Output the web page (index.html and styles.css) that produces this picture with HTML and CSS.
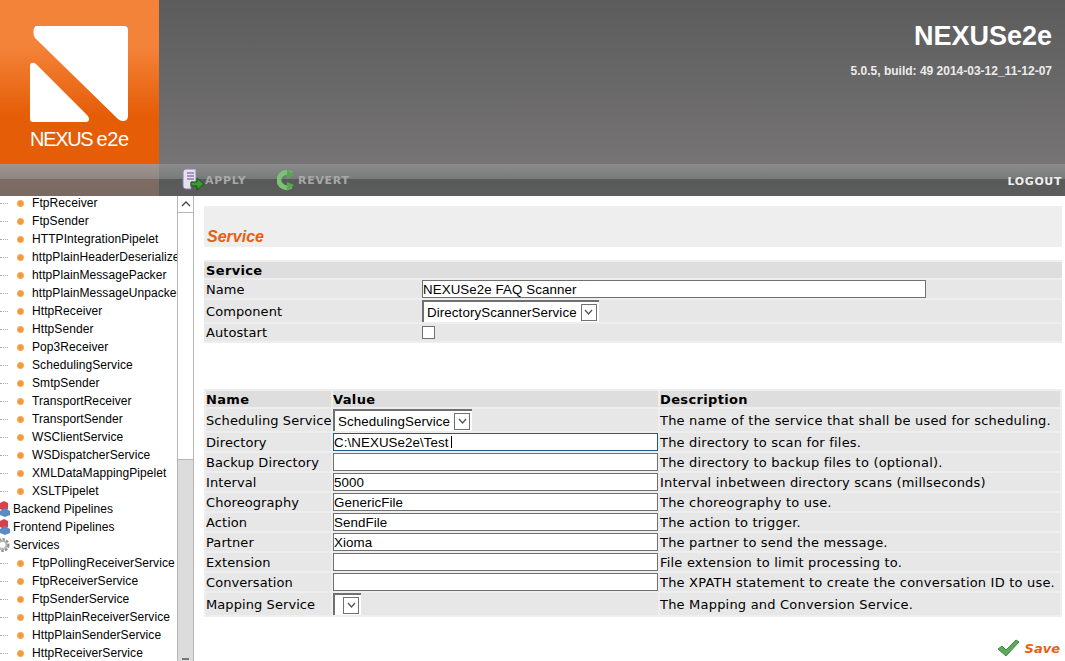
FILE: index.html
```html
<!DOCTYPE html>
<html lang="en">
<head>
	<meta charset="UTF-8">
	<title>NEXUSe2e</title>
	<link rel="stylesheet" href="styles.css">
</head>
<body>
	<header class="top">
		<div class="logo">
			<svg class="logo_mark" width="98" height="96" viewBox="0 0 98 96">
				<path d="M7 0H94Q98 0 98 4V90Q98 95 93 95Q90 95 88 93L5 12Q3 9 3.500 5Q4 0 7 0Z" fill="#fff"/>
				<path d="M0 40Q0 36.700 3 36.700Q5 36.700 7 39L57 89Q59 91 59 93Q59 96 56 96H3Q0 96 0 93Z" fill="#fff"/>
			</svg>
			<div class="logo_text">NEXUS<span class="logo_e2e">e2e</span></div>
		</div>
		<div class="brand">
			<div class="brand_name">NEXUSe2e</div>
			<div class="brand_build">5.0.5, build: 49 2014-03-12_11-12-07</div>
		</div>
	</header>
	<nav class="toolbar">
		<div class="toolbar_logo"></div>
		<div class="toolbar_main">
			<a class="tool tool_apply">
				<svg width="23" height="24" viewBox="0 0 23 24">
					<path d="M1 4Q1 1 4 1H14V14H9V21H4Q1 21 1 18Z" fill="#e6dff0" stroke="#8c80a8"/>
					<path d="M5 5H12M5 8H12M5 11H12" stroke="#8c80a8" stroke-width="1.400"/>
					<path d="M9 14H15V10L22 16L15 22V18H9Z" fill="#3c9a32" stroke="#0f5c10"/>
				</svg>
				<span>APPLY</span>
			</a>
			<a class="tool tool_revert">
				<svg width="19" height="24" viewBox="0 0 19 24">
					<path d="M14 6A7.500 7.500 0 1 0 14 18" fill="none" stroke="#7cc274" stroke-width="5"/>
					<path d="M10 1L17 7L10 11Z" fill="#5aa552"/>
					<path d="M10 14L17 17L10 23Z" fill="#5aa552"/>
				</svg>
				<span>REVERT</span>
			</a>
			<a class="logout">LOGOUT</a>
		</div>
	</nav>
	<div class="page">
		<aside class="side">
			<ul class="tree">
				<li class="leaf">FtpReceiver</li>
				<li class="leaf">FtpSender</li>
				<li class="leaf">HTTPIntegrationPipelet</li>
				<li class="leaf">httpPlainHeaderDeserializer</li>
				<li class="leaf">httpPlainMessagePacker</li>
				<li class="leaf">httpPlainMessageUnpacker</li>
				<li class="leaf">HttpReceiver</li>
				<li class="leaf">HttpSender</li>
				<li class="leaf">Pop3Receiver</li>
				<li class="leaf">SchedulingService</li>
				<li class="leaf">SmtpSender</li>
				<li class="leaf">TransportReceiver</li>
				<li class="leaf">TransportSender</li>
				<li class="leaf">WSClientService</li>
				<li class="leaf">WSDispatcherService</li>
				<li class="leaf">XMLDataMappingPipelet</li>
				<li class="leaf">XSLTPipelet</li>
				<li class="group">
					<svg width="10" height="16" viewBox="0 0 10 16"><path d="M0 2L4 0L8 2V8L4 10L0 8Z" fill="#d9414a"/><path d="M0 10L5 7L10 10V14L5 16L0 14Z" fill="#5b8ac6"/></svg>
					Backend Pipelines
				</li>
				<li class="group">
					<svg width="10" height="16" viewBox="0 0 10 16"><path d="M0 2L4 0L8 2V8L4 10L0 8Z" fill="#d9414a"/><path d="M0 10L5 7L10 10V14L5 16L0 14Z" fill="#5b8ac6"/></svg>
					Frontend Pipelines
				</li>
				<li class="group">
					<svg width="10" height="16" viewBox="0 0 10 16"><circle cx="2.500" cy="8" r="5.500" fill="none" stroke="#8f8f8f" stroke-width="3" stroke-dasharray="2.400 1.200"/><circle cx="2.500" cy="8" r="4" fill="none" stroke="#b5b5b5" stroke-width="2"/></svg>
					Services
				</li>
				<li class="leaf">FtpPollingReceiverService</li>
				<li class="leaf">FtpReceiverService</li>
				<li class="leaf">FtpSenderService</li>
				<li class="leaf">HttpPlainReceiverService</li>
				<li class="leaf">HttpPlainSenderService</li>
				<li class="leaf">HttpReceiverService</li>
			</ul>
			<div class="scrollbar">
				<div class="scroll_btn">
					<svg width="10" height="6" viewBox="0 0 10 6"><path d="M1 5L5 1L9 5" fill="none" stroke="#444" stroke-width="1.300"/></svg>
				</div>
				<div class="scroll_thumb"></div>
				<div class="scroll_rest"></div>
			</div>
		</aside>
		<main class="content">
			<h1 class="title">Service</h1>
			<table class="form form_top">
				<colgroup><col class="col_label"><col></colgroup>
				<tr><th colspan="2">Service</th></tr>
				<tr><td>Name</td><td><input class="field field_name" type="text" value="NEXUSe2e FAQ Scanner"></td></tr>
				<tr class="row_select">
					<td>Component</td>
					<td><div class="select"><span>DirectoryScannerService</span><b class="select_btn"><svg width="9" height="6" viewBox="0 0 9 6"><path d="M1 1L4.500 5L8 1" fill="none" stroke="#555" stroke-width="1.300"/></svg></b></div></td>
				</tr>
				<tr class="row_check"><td>Autostart</td><td><input class="check" type="checkbox"></td></tr>
			</table>
			<table class="form form_params">
				<colgroup><col class="col_name"><col class="col_value"><col></colgroup>
				<tr><th>Name</th><th>Value</th><th>Description</th></tr>
				<tr class="row_select">
					<td>Scheduling Service</td>
					<td><div class="select"><span>SchedulingService</span><b class="select_btn"><svg width="9" height="6" viewBox="0 0 9 6"><path d="M1 1L4.500 5L8 1" fill="none" stroke="#555" stroke-width="1.300"/></svg></b></div></td>
					<td>The name of the service that shall be used for scheduling.</td>
				</tr>
				<tr>
					<td>Directory</td>
					<td><div class="field_wrap"><input class="field field_focus" type="text" value="C:\NEXUSe2e\Test"><i class="caret"></i></div></td>
					<td>The directory to scan for files.</td>
				</tr>
				<tr><td>Backup Directory</td><td><input class="field" type="text"></td><td>The directory to backup files to (optional).</td></tr>
				<tr><td>Interval</td><td><input class="field" type="text" value="5000"></td><td>Interval inbetween directory scans (millseconds)</td></tr>
				<tr><td>Choreography</td><td><input class="field" type="text" value="GenericFile"></td><td>The choreography to use.</td></tr>
				<tr><td>Action</td><td><input class="field" type="text" value="SendFile"></td><td>The action to trigger.</td></tr>
				<tr><td>Partner</td><td><input class="field" type="text" value="Xioma"></td><td>The partner to send the message.</td></tr>
				<tr><td>Extension</td><td><input class="field" type="text"></td><td>File extension to limit processing to.</td></tr>
				<tr><td>Conversation</td><td><input class="field" type="text"></td><td>The XPATH statement to create the conversation ID to use.</td></tr>
				<tr class="row_select">
					<td>Mapping Service</td>
					<td><div class="select select_empty"><span></span><b class="select_btn"><svg width="9" height="6" viewBox="0 0 9 6"><path d="M1 1L4.500 5L8 1" fill="none" stroke="#555" stroke-width="1.300"/></svg></b></div></td>
					<td>The Mapping and Conversion Service.</td>
				</tr>
			</table>
			<div class="actions">
				<a class="save">
					<svg width="23" height="18" viewBox="0 0 23 18"><path d="M1 10L5 7L9 11L19 1L22 3L9 17Z" fill="#5fa75a" stroke="#3f8a3f"/></svg>
					Save
				</a>
			</div>
		</main>
	</div>
</body>
</html>
```

FILE: styles.css
```css
*{
	margin: 0;
	padding: 0;
	box-sizing: border-box;
}
html, body{
	height: 661px;
	overflow: hidden;
}
body{
	background-color: #fff;
	font-family: "Liberation Sans", Arial, sans-serif;
	color: #000;
}
.top{
	display: flex;
	height: 164px;
	background: linear-gradient(#5c5c5c, #767474);
}
.logo{
	width: 159px;
	background: linear-gradient(#f4833a 0, #f4833a 45px, #e55e07 115px, #e55e07 100%);
	padding: 26px 0 0 30px;
}
.logo_mark{
	display: block;
}
.logo_text{
	color: #fff;
	font-size: 20px;
	line-height: 24px;
	letter-spacing: -1.300px;
	margin-top: 5px;
}
.logo_e2e{
	margin-left: 4px;
	letter-spacing: -0.300px;
}
.brand{
	flex: 1;
	text-align: right;
	padding: 21px 13px 0 0;
	color: #fff;
}
.brand_name{
	font-size: 27px;
	line-height: 30px;
	font-weight: bold;
}
.brand_build{
	font-size: 12px;
	line-height: 14px;
	font-weight: bold;
	color: #ececec;
	margin-top: 13px;
}
.toolbar{
	display: flex;
	height: 32px;
}
.toolbar_logo{
	width: 159px;
	background: linear-gradient(#a09590 0, #8f8580 15px, #7d6c64 15px, #7a6a62 100%);
}
.toolbar_main{
	flex: 1;
	display: flex;
	align-items: center;
	padding-left: 23px;
	background: linear-gradient(#8a8c8b 0, #787a79 15px, #585a59 15px, #5c5c5c 100%);
	font-family: "DejaVu Sans", Verdana, sans-serif;
	font-weight: bold;
}
.tool{
	display: flex;
	align-items: center;
	font-size: 11px;
	letter-spacing: 0.700px;
	color: #a8a8a8;
}
.tool svg{
	display: block;
}
.tool_apply{
	width: 95px;
}
.tool_revert span{
	margin-left: 2px;
}
.logout{
	margin-left: auto;
	margin-right: 3px;
	padding-top: 2px;
	font-size: 11px;
	letter-spacing: 0.600px;
	color: #eee;
}
.page{
	display: flex;
	height: 465px;
}
.side{
	width: 194px;
	display: flex;
	border-right: 1px solid #b5b5b5;
	overflow: hidden;
}
.tree{
	width: 177px;
	list-style: none;
	overflow: hidden;
	font-size: 12px;
	letter-spacing: 0.080px;
	margin-top: -2px;
}
.tree li{
	height: 18px;
	line-height: 14px;
	white-space: nowrap;
	display: flex;
	align-items: center;
}
.leaf{
	padding-left: 32px;
	position: relative;
}
.leaf::before{
	content: "";
	position: absolute;
	left: 0;
	top: 9px;
	width: 8px;
	border-top: 1px dotted #aaa;
}
.leaf::after{
	content: "";
	position: absolute;
	left: 17px;
	top: 6px;
	width: 7px;
	height: 7px;
	border-radius: 50%;
	background: radial-gradient(#f49a3a 40%, #f9c593 100%);
}
.group svg{
	flex: none;
	margin-right: 3px;
}
.scrollbar{
	width: 16px;
	display: flex;
	flex-direction: column;
	border-left: 1px solid #b5b5b5;
}
.scroll_btn{
	height: 17px;
	display: flex;
	align-items: center;
	justify-content: center;
	border-bottom: 1px solid #b5b5b5;
}
.scroll_thumb{
	height: 247px;
	background-color: #fff;
	border-bottom: 1px solid #b5b5b5;
}
.scroll_rest{
	flex: 1;
	background-color: #dcdcdc;
	display: flex;
	align-items: flex-end;
	justify-content: center;
	padding-bottom: 1px;
}
.scroll_rest::after{
	content: "";
	width: 7px;
	height: 2px;
	background-color: #777;
}
.content{
	flex: 1;
	padding: 10px 3px 0 10px;
	font-family: "DejaVu Sans", Verdana, sans-serif;
	font-size: 13px;
}
.title{
	height: 41px;
	background-color: #eee;
	padding: 21px 0 0 3px;
	font-family: "Liberation Sans", Arial, sans-serif;
	font-size: 16px;
	line-height: 20px;
	font-style: italic;
	font-weight: bold;
	color: #e8600f;
}
.form{
	width: 100%;
	border-collapse: separate;
	border-spacing: 2px;
	table-layout: fixed;
	background-color: #eee;
}
.form th, .form td{
	background-color: #e7e7e7;
	padding: 0;
	text-align: left;
	white-space: nowrap;
	height: 18px;
	line-height: 15px;
	font-weight: normal;
	letter-spacing: 0.080px;
}
.form th{
	background-color: #dedede;
	font-weight: bold;
	height: 16px;
	letter-spacing: 0.350px;
}
.form td:nth-child(3){
	letter-spacing: 0.200px;
}
.form .row_select td{
	height: 22px;
}
.form .row_check td{
	height: 17px;
}
.form_top{
	margin-top: 13px;
	border-spacing: 0 2px;
}
.form_top th, .form_top td:first-child{
	padding-left: 2px;
}
.col_label{
	width: 218px;
}
.form_params{
	margin-top: 46px;
}
.col_name{
	width: 125px;
}
.col_value{
	width: 325px;
}
.field_wrap{
	position: relative;
}
.caret{
	position: absolute;
	left: 118px;
	top: 3px;
	width: 1px;
	height: 12px;
	background-color: #000;
}
.field{
	display: block;
	width: 325px;
	height: 18px;
	border: 1px solid #707070;
	background-color: #fff;
	padding: 0;
	font-family: "Liberation Sans", Arial, sans-serif;
	font-size: 13.333px;
	letter-spacing: 0.080px;
	color: #000;
	outline: none;
}
.field_name{
	width: 504px;
}
.field_focus{
	border-color: #1d5a8a;
}
.select{
	display: inline-flex;
	align-items: center;
	height: 22px;
	background-color: #fff;
	border-top: 2px solid #707070;
	border-left: 2px solid #707070;
	font-family: "Liberation Sans", Arial, sans-serif;
	font-size: 13.333px;
	letter-spacing: 0.100px;
	vertical-align: top;
}
.select span{
	padding: 0 4px 0 3px;
}
.select_btn{
	display: flex;
	align-items: center;
	justify-content: center;
	width: 16px;
	height: 17px;
	border: 1px solid #707070;
	margin-right: 2px;
}
.select_empty span{
	padding: 0;
	width: 8px;
}
.check{
	display: block;
	appearance: none;
	width: 13px;
	height: 13px;
	border: 1px solid #707070;
	background-color: #fff;
}
.actions{
	display: flex;
	justify-content: flex-end;
	margin-top: 22px;
	padding-right: 2px;
}
.save{
	display: flex;
	align-items: center;
	gap: 5px;
	font-family: "DejaVu Sans", Verdana, sans-serif;
	font-size: 13px;
	font-style: italic;
	font-weight: bold;
	color: #e8600f;
}
```
